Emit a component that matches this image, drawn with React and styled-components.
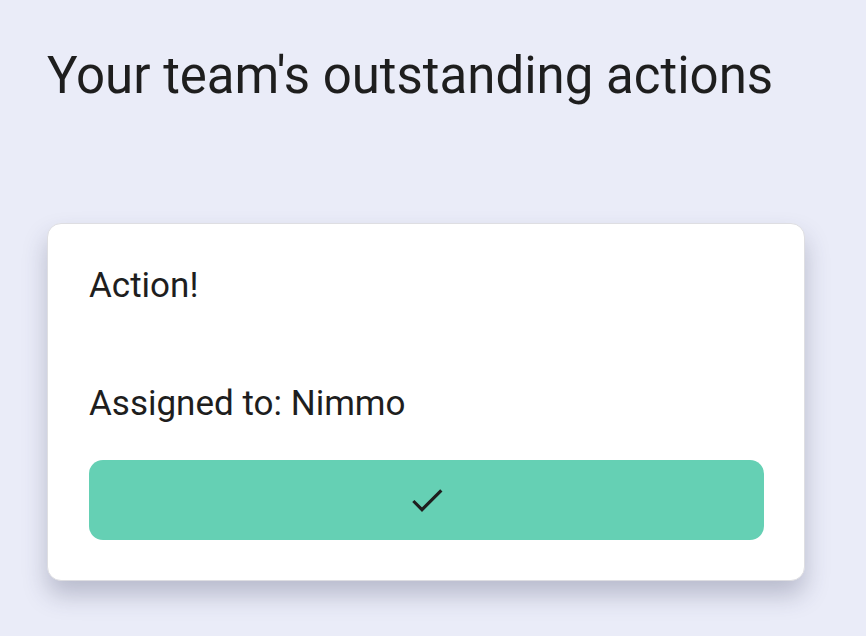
import React from "react";
import styled, { createGlobalStyle } from "styled-components";

const Global = createGlobalStyle`
  html, body { margin: 0; padding: 0; background: #eaecf8; }
  body { font-family: Roboto, "Noto Sans", sans-serif; color: #1e1e1e; }
`;

const Page = styled.main`
  padding: 40px 61px 40px 47px;
  display: flex;
  flex-direction: column;
`;

const Title = styled.h1`
  margin: 0;
  font-size: 51px;
  font-weight: 400;
  line-height: 72px;
  white-space: nowrap;
`;

const List = styled.section`
  margin-top: 111px;
  display: flex;
  flex-direction: column;
`;

const Card = styled.article`
  background: #fff;
  border-radius: 14px;
  border: 1px solid #dedee2;
  box-shadow: 0 14px 24px rgba(50, 55, 90, 0.27);
  padding: 40px 40px 40px 41px;
  display: flex;
  flex-direction: column;
`;

const Text = styled.p`
  margin: 0;
  font-size: 35px;
  line-height: 44px;
  font-weight: 400;
`;

const Assigned = styled(Text)`
  margin-top: 74px;
`;

const DoneButton = styled.button`
  margin-top: 34px;
  height: 80px;
  border: none;
  border-radius: 14px;
  background: #65d0b4;
  display: flex;
  align-items: center;
  justify-content: center;
  cursor: pointer;
`;

export default function App() {
  return (
    <>
      <Global />
      <Page>
        <Title>Your team's outstanding actions</Title>
        <List>
          <Card>
            <Text>Action!</Text>
            <Assigned>Assigned to: Nimmo</Assigned>
            <DoneButton aria-label="Complete">
              <svg width="40" height="40" viewBox="0 0 24 24" fill="none">
                <path d="M3.8 12.6l5.2 5.2L20.6 6.2" stroke="#1e1e1e" strokeWidth="1.9" strokeLinecap="butt" />
              </svg>
            </DoneButton>
          </Card>
        </List>
      </Page>
    </>
  );
}
